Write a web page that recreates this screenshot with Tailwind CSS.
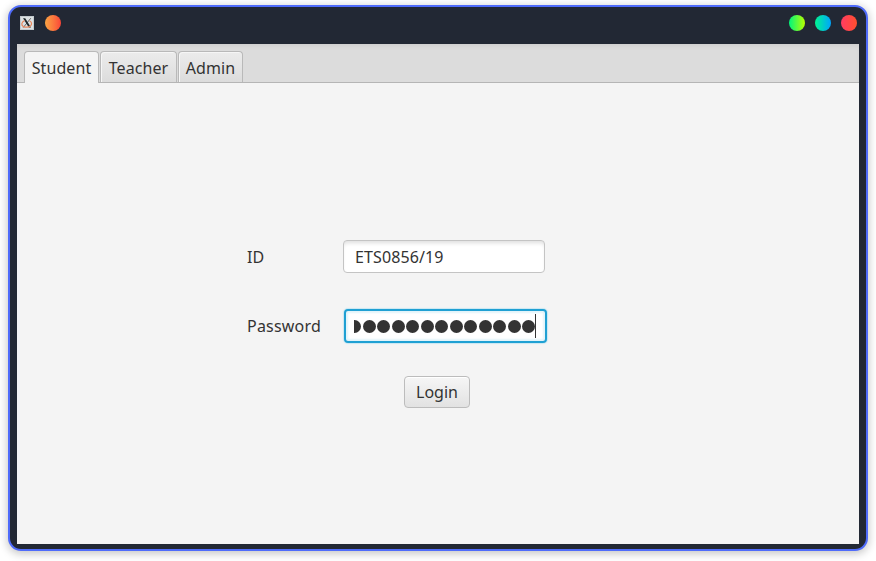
<!DOCTYPE html>
<html lang="en">
<head>
<meta charset="utf-8">
<title>Login</title>
<script src="https://cdn.jsdelivr.net/npm/@tailwindcss/browser@4"></script>
</head>
<body class="h-[561px] w-[876px] overflow-hidden bg-white pt-[5px] pl-2 font-['Noto_Sans',sans-serif] text-[16px] leading-[22px] text-[#333]">
<div class="flex h-[546px] w-[860px] flex-col rounded-[13px] border-2 border-[#4f6bfa] bg-[#222834] px-[7px] pb-[5px] shadow-[0_2px_8px_1px_rgba(0,0,0,0.22)]">
  <header class="flex h-[37px] shrink-0 items-center justify-between pr-[2px] pl-[3px] pb-[5px]">
    <div class="flex items-center gap-[11px]">
      <svg width="14" height="14" viewBox="0 0 14 14">
        <rect x="0.5" y="0.5" width="13" height="13" fill="#dce1e3" stroke="#c3cace"/>
        <path d="M10.8 2.2 3.2 11.6" stroke="#555" stroke-width="0.9"/>
        <path d="M3 2.2h2.2L11 11.6H8.8Z" fill="#20282b"/>
        <path d="M4.6 4.6C1.4 6 1 9 3.2 10.4c1.8 1.2 5.400 1 7.200-.4 1.900-1.600 1.400-4.200-1-5.200" fill="none" stroke="#e8875d" stroke-width="1.2"/>
      </svg>
      <span class="size-4 rounded-full bg-linear-to-r from-[#f9a343] to-[#fa4338]"></span>
    </div>
    <div class="flex items-center gap-[10px]">
      <span class="size-4 rounded-full bg-linear-to-r/srgb from-[#00f57c] to-[#b8ff00]"></span>
      <span class="size-4 rounded-full bg-linear-to-r/srgb from-[#00f590] to-[#00a4ff]"></span>
      <span class="size-4 rounded-full bg-linear-to-r/srgb from-[#ff3c62] to-[#ff4f2e]"></span>
    </div>
  </header>
  <main class="flex min-h-0 flex-1 flex-col bg-[#f4f4f4]">
    <nav class="flex h-[39px] shrink-0 items-end gap-[1px] border-b border-[#b5b5b5] bg-[#dcdcdc] pl-[7px] tracking-[0.1px] shadow-[inset_0_3px_4px_-1px_#cecece]">
      <div class="-mb-px flex h-[32px] w-[75px] justify-center rounded-t-[4px] border border-b-0 border-[#b9b9b9] bg-[#f4f4f4] pt-[5px]">Student</div>
      <div class="flex h-[31px] w-[77px] justify-center rounded-t-[4px] border border-b-0 border-[#b9b9b9] bg-linear-to-b from-[#ececec] to-[#dcdcdc] pt-[5px] shadow-[inset_1px_1px_0_#f6f6f6]">Teacher</div>
      <div class="flex h-[31px] w-[65px] justify-center rounded-t-[4px] border border-b-0 border-[#b9b9b9] bg-linear-to-b from-[#ececec] to-[#dcdcdc] pt-[5px] shadow-[inset_1px_1px_0_#f6f6f6]">Admin</div>
    </nav>
    <form class="flex flex-col pt-[157px] pl-[230px]">
      <div class="flex h-[33px] items-center">
        <label class="w-[96px] tracking-[0.2px]">ID</label>
        <div class="flex h-[33px] w-[202px] items-center rounded-[4px] border border-[#c4c4c4] bg-white pl-[11px] tracking-[0.1px] shadow-[inset_0_4px_4px_-2px_#dedede]">ETS0856/19</div>
      </div>
      <div class="mt-[35px] flex h-[36px] items-center">
        <label class="w-[97px] tracking-[0.2px]">Password</label>
        <div class="flex h-[34px] w-[203px] items-center rounded-[4px] border-2 border-[#1fa0d3] bg-white px-[8px] shadow-[0_0_1px_1px_#c9e7f2,inset_0_0_2px_2px_#e2f4fa]">
          <div class="flex h-[13px] w-[181px] items-center justify-end gap-[1.5px] overflow-hidden">
            <span class="size-[13px] shrink-0 rounded-full bg-[#333]"></span>
            <span class="size-[13px] shrink-0 rounded-full bg-[#333]"></span>
            <span class="size-[13px] shrink-0 rounded-full bg-[#333]"></span>
            <span class="size-[13px] shrink-0 rounded-full bg-[#333]"></span>
            <span class="size-[13px] shrink-0 rounded-full bg-[#333]"></span>
            <span class="size-[13px] shrink-0 rounded-full bg-[#333]"></span>
            <span class="size-[13px] shrink-0 rounded-full bg-[#333]"></span>
            <span class="size-[13px] shrink-0 rounded-full bg-[#333]"></span>
            <span class="size-[13px] shrink-0 rounded-full bg-[#333]"></span>
            <span class="size-[13px] shrink-0 rounded-full bg-[#333]"></span>
            <span class="size-[13px] shrink-0 rounded-full bg-[#333]"></span>
            <span class="size-[13px] shrink-0 rounded-full bg-[#333]"></span>
            <span class="size-[13px] shrink-0 rounded-full bg-[#333]"></span>
          </div>
          <span class="h-[24px] w-px shrink-0 bg-[#333]"></span>
        </div>
      </div>
      <button type="button" class="mt-[32px] ml-[157px] flex h-[32px] w-[66px] items-center justify-center rounded-[4px] border border-[#bcbcbc] bg-linear-to-b from-[#f6f6f6] to-[#e2e2e2] pb-px shadow-[inset_0_1px_0_#fff]">Login</button>
    </form>
  </main>
</div>
</body>
</html>
